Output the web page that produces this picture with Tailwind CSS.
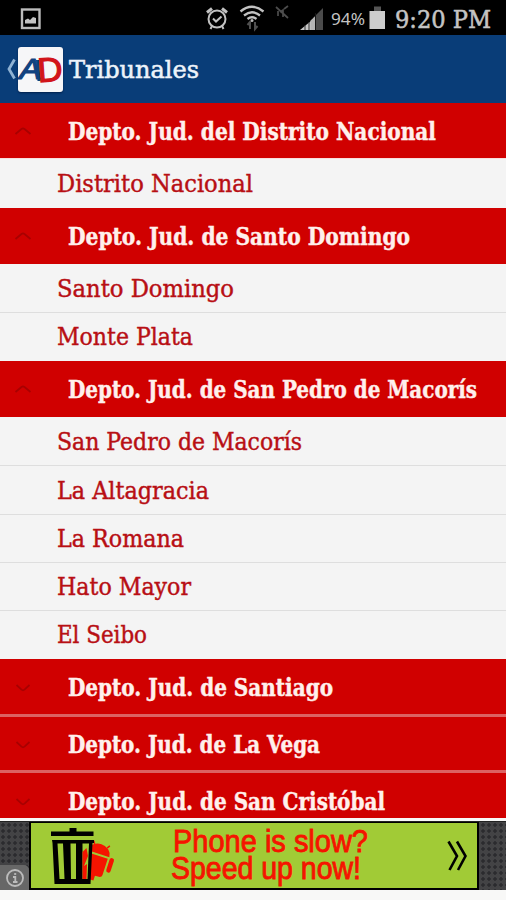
<!DOCTYPE html>
<html lang="es">
<head>
<meta charset="utf-8">
<title>Tribunales</title>
<script src="https://cdn.jsdelivr.net/npm/@tailwindcss/browser@4"></script>
</head>
<body class="w-[506px] h-[900px] overflow-hidden bg-[#f8f8f7] flex flex-col font-['DejaVu_Serif_Condensed','DejaVu_Serif',serif] whitespace-nowrap">
<svg class="hidden">
  <symbol id="up" viewBox="0 0 18 10"><path d="M1.500 8 L7.500 3 Q9 1.800 10.500 3 L16.500 8" fill="none" stroke="#a80000" stroke-width="1.800"/></symbol>
  <symbol id="down" viewBox="0 0 18 10"><path d="M2.500 3 L7.500 7.600 Q9 8.800 10.500 7.600 L15.500 3" fill="none" stroke="#a80000" stroke-width="1.800"/></symbol>
</svg>

<header class="shrink-0">
  <div class="h-[35px] bg-black flex items-center">
    <svg class="w-[506px] h-[35px]" viewBox="0 0 506 35" fill="none">
      <rect x="22" y="9.500" width="17.500" height="18.500" stroke="#bcbcbc" stroke-width="2.400"/>
      <path d="M25 23.500V20l3-1.500 2 1.500 3-3 3 1v5.500z" fill="#c4c4c4"/>
      <g stroke="#c2c2c2" stroke-width="2">
        <circle cx="217" cy="19" r="8.500"/><path d="M213 18.500l3 3 5.500-5"/>
        <path d="M207 12.500l5-4M227 12.500l-5-4" stroke-width="3"/>
        <path d="M212 26l-1.500 3M222 26l1.500 3"/>
      </g>
      <path d="M240.500 11.500q11.500-9.500 23 0M244 15.500q8-6.500 16 0M247.500 19q4.500-3.500 9 0" stroke="#c2c2c2" stroke-width="2.300"/>
      <circle cx="252" cy="20.500" r="1.500" fill="#b8b8b8"/>
      <path d="M250 29v-7l-2.500 3M255 22v7l2.500-3" stroke="#505050" stroke-width="2"/>
      <path d="M276 7l12 11M278 16v-5M280 12l3-2v7M284 9l4-3" stroke="#4d4d4d" stroke-width="1.700"/>
      <path d="M300 30L314 18.500V30z" fill="#c6c6c6"/>
      <path d="M305 25v5M309 22v8" stroke="#333"/>
      <path d="M313 18l10-10V30h-10z" fill="#4b4b4b"/>
      <path d="M310.500 20.500l4.500-4V30h-4.500z" fill="#b5b5b5"/>
      <path d="M315.500 13v17" stroke="#161616"/>
      <path d="M369.500 11h15.500v18h-15.500z" fill="#cdcdcd"/><path d="M374 6.500h7V11h-7z" fill="#555"/>
      <text x="331" y="24.500" font-size="17" fill="#c4c4c4" font-family="Noto Sans, sans-serif" textLength="34" lengthAdjust="spacingAndGlyphs">94%</text>
      <text x="395" y="27.500" font-size="24" fill="#c4c4c4" stroke="#c4c4c4" stroke-width="0.500" textLength="96" lengthAdjust="spacingAndGlyphs">9:20 PM</text>
    </svg>
  </div>
  <div class="h-[68px] bg-[#093d78] flex items-center pl-[6px]">
    <svg class="w-[10px] h-[22px]" viewBox="0 0 10 22"><path d="M8.500 1.500L3 11l5.500 9.500" fill="none" stroke="#8fb2d3" stroke-width="2.800"/></svg>
    <div class="ml-[2px] w-[45px] h-[45px] rounded-[3px] bg-[#f6f6f8] shadow-[0_1px_2px_#00204d]">
      <svg class="w-[45px] h-[45px]" viewBox="0 0 45 45" font-family="Liberation Sans, sans-serif">
        <text x="1.500" y="31.500" font-size="29" font-style="italic" fill="#12427f" stroke="#12427f" stroke-width="1.200" textLength="22" lengthAdjust="spacingAndGlyphs">A</text>
        <path d="M19.500 13l1.500 21" stroke="#12427f" stroke-width="3"/>
        <text x="19.500" y="34.500" font-size="34" fill="#d2141a" stroke="#d2141a" stroke-width="1.300" textLength="25" lengthAdjust="spacingAndGlyphs" transform="rotate(-4 32 24)">D</text>
      </svg>
    </div>
    <h1 class="ml-[6px] text-[25px]"><svg class="w-[130px] h-[36px] overflow-visible fill-[#edf3fa] stroke-[#edf3fa] [stroke-width:0.5]"><text y="27" textLength="130" lengthAdjust="spacingAndGlyphs">Tribunales</text></svg></h1>
  </div>
</header>

<main class="h-[715px] shrink-0 overflow-hidden bg-[#f4f4f4] fill-[#b80f14] stroke-[#b80f14] [stroke-width:0.4] text-[23.500px]">
  <section>
    <h2 class="h-[56px] bg-[#d00000] border-b border-[#f9dede] fill-[#fff0ec] stroke-[#fff0ec] font-bold flex items-center pl-[14px]"><svg class="w-[18px] h-[10px]"><use href="#up"/></svg><svg class="ml-[36px] w-[368px] h-[36px] overflow-visible"><text y="26.500" textLength="368" lengthAdjust="spacingAndGlyphs">Depto. Jud. del Distrito Nacional</text></svg></h2>
    <p class="h-[49px] flex items-center pl-[57px]"><svg class="w-[196px] h-[36px] overflow-visible"><text y="26" textLength="196" lengthAdjust="spacingAndGlyphs">Distrito Nacional</text></svg></p>
  </section>
  <section>
    <h2 class="h-[56px] bg-[#d00000] fill-[#fff0ec] stroke-[#fff0ec] font-bold flex items-center pl-[14px]"><svg class="w-[18px] h-[10px]"><use href="#up"/></svg><svg class="ml-[36px] w-[342px] h-[36px] overflow-visible"><text y="26.500" textLength="342" lengthAdjust="spacingAndGlyphs">Depto. Jud. de Santo Domingo</text></svg></h2>
    <p class="h-[49px] border-b border-[#dedede] flex items-center pl-[57px]"><svg class="w-[177px] h-[36px] overflow-visible"><text y="27" textLength="177" lengthAdjust="spacingAndGlyphs">Santo Domingo</text></svg></p>
    <p class="h-[48px] flex items-center pl-[57px]"><svg class="w-[136px] h-[36px] overflow-visible"><text y="26" textLength="136" lengthAdjust="spacingAndGlyphs">Monte Plata</text></svg></p>
  </section>
  <section>
    <h2 class="h-[56px] bg-[#d00000] fill-[#fff0ec] stroke-[#fff0ec] font-bold flex items-center pl-[14px]"><svg class="w-[18px] h-[10px]"><use href="#up"/></svg><svg class="ml-[36px] w-[409px] h-[36px] overflow-visible"><text y="27" textLength="409" lengthAdjust="spacingAndGlyphs">Depto. Jud. de San Pedro de Macorís</text></svg></h2>
    <p class="h-[49px] border-b border-[#dedede] flex items-center pl-[57px]"><svg class="w-[245px] h-[36px] overflow-visible"><text y="27" textLength="245" lengthAdjust="spacingAndGlyphs">San Pedro de Macorís</text></svg></p>
    <p class="h-[49px] border-b border-[#dedede] flex items-center pl-[57px]"><svg class="w-[152px] h-[36px] overflow-visible"><text y="26.500" textLength="152" lengthAdjust="spacingAndGlyphs">La Altagracia</text></svg></p>
    <p class="h-[48px] border-b border-[#dedede] flex items-center pl-[57px]"><svg class="w-[127px] h-[36px] overflow-visible"><text y="26" textLength="127" lengthAdjust="spacingAndGlyphs">La Romana</text></svg></p>
    <p class="h-[48px] border-b border-[#dedede] flex items-center pl-[57px]"><svg class="w-[134px] h-[36px] overflow-visible"><text y="26" textLength="134" lengthAdjust="spacingAndGlyphs">Hato Mayor</text></svg></p>
    <p class="h-[48px] flex items-center pl-[57px]"><svg class="w-[90px] h-[36px] overflow-visible"><text y="26" textLength="90" lengthAdjust="spacingAndGlyphs">El Seibo</text></svg></p>
  </section>
  <section class="fill-[#fff0ec] stroke-[#fff0ec] font-bold">
    <h2 class="h-[58px] bg-[#d00000] border-b-3 border-[#dc6262] flex items-center pl-[14px]"><svg class="w-[18px] h-[10px]"><use href="#down"/></svg><svg class="ml-[36px] w-[265px] h-[36px] overflow-visible"><text y="27" textLength="265" lengthAdjust="spacingAndGlyphs">Depto. Jud. de Santiago</text></svg></h2>
    <h2 class="h-[56px] bg-[#d00000] border-b-3 border-[#dc6262] flex items-center pl-[14px]"><svg class="w-[18px] h-[10px]"><use href="#down"/></svg><svg class="ml-[36px] w-[252px] h-[36px] overflow-visible"><text y="27" textLength="252" lengthAdjust="spacingAndGlyphs">Depto. Jud. de La Vega</text></svg></h2>
    <h2 class="h-[55px] bg-[#d00000] flex items-center pl-[14px]"><svg class="w-[18px] h-[10px]"><use href="#down"/></svg><svg class="ml-[36px] w-[317px] h-[36px] overflow-visible"><text y="26.500" textLength="317" lengthAdjust="spacingAndGlyphs">Depto. Jud. de San Cristóbal</text></svg></h2>
  </section>
</main>

<aside class="mt-[3px] h-[69px] shrink-0 flex bg-[#434345] bg-[radial-gradient(#2b2b2e_35%,transparent_45%)] bg-[length:6px_6px] border-t border-[#222]">
  <div class="w-[29px] flex items-end">
    <div class="w-[29px] h-[25px] rounded-tr-[5px] bg-[#676767] flex items-center justify-center">
      <svg class="w-[20px] h-[20px]" viewBox="0 0 20 20" fill="none" stroke="#bcbcbc" stroke-width="1.800"><circle cx="10" cy="10" r="8"/><path d="M8 9h2.300V14M8 14h4.500"/><path d="M9.200 6h2"/></svg>
    </div>
  </div>
  <div class="w-[450px] bg-[#a1cb36] border-2 border-t-1 border-black flex items-center">
    <svg class="ml-[18px] w-[66px] h-[60px]" viewBox="49 825 66 60">
      <g fill="#f51400" transform="rotate(18 98 862)">
        <path d="M84 853a11.500 10 0 0 1 23 0zM83 855h23v17q0 3-4 3h-3v5h-5v-5h-7q-4 0-4-3z"/>
        <rect x="108" y="853" width="4.500" height="15" rx="2.200"/>
        <path d="M89 845l-2-3M102 845l2-3" stroke="#f51400" stroke-width="1.500"/>
      </g>
      <path d="M51 830.500h18.500V827h7v3.500H93.500v4.500H51z"/>
      <path d="M52 839h42v3h-1.500l-2 41H54.500l-2-41z"/>
      <path d="M57.500 842.500h5.500l1.500 35.500h-5zM70.500 842.500h5.500v35.500h-5z" fill="#a1cb36"/>
      <path d="M82.500 842.500h6.500l-1.500 35.500h-5z" fill="#a1cb36"/>
      <path d="M82.500 851l4-4 1.500 8-4 10 3-2-.5 15h-4z" fill="#f51400"/>
    </svg>
    <svg class="ml-[54px] w-[202px] h-[66px] overflow-visible" viewBox="169 822 202 66" font-family="Liberation Sans, sans-serif" font-size="31.500" fill="#f51400" stroke="#f51400" stroke-width="0.900">
      <text x="173" y="851" textLength="195" lengthAdjust="spacingAndGlyphs">Phone is slow?</text>
      <text x="171" y="878" textLength="190" lengthAdjust="spacingAndGlyphs">Speed up now!</text>
    </svg>
    <svg class="ml-[76px] w-[20px] h-[32px]" viewBox="0 0 20 32" fill="none" stroke="#000" stroke-width="2.600"><path d="M1.500 1.500L10 16 2.500 30M10 1.500L18.500 16 11 30"/></svg>
  </div>
</aside>
</body>
</html>
